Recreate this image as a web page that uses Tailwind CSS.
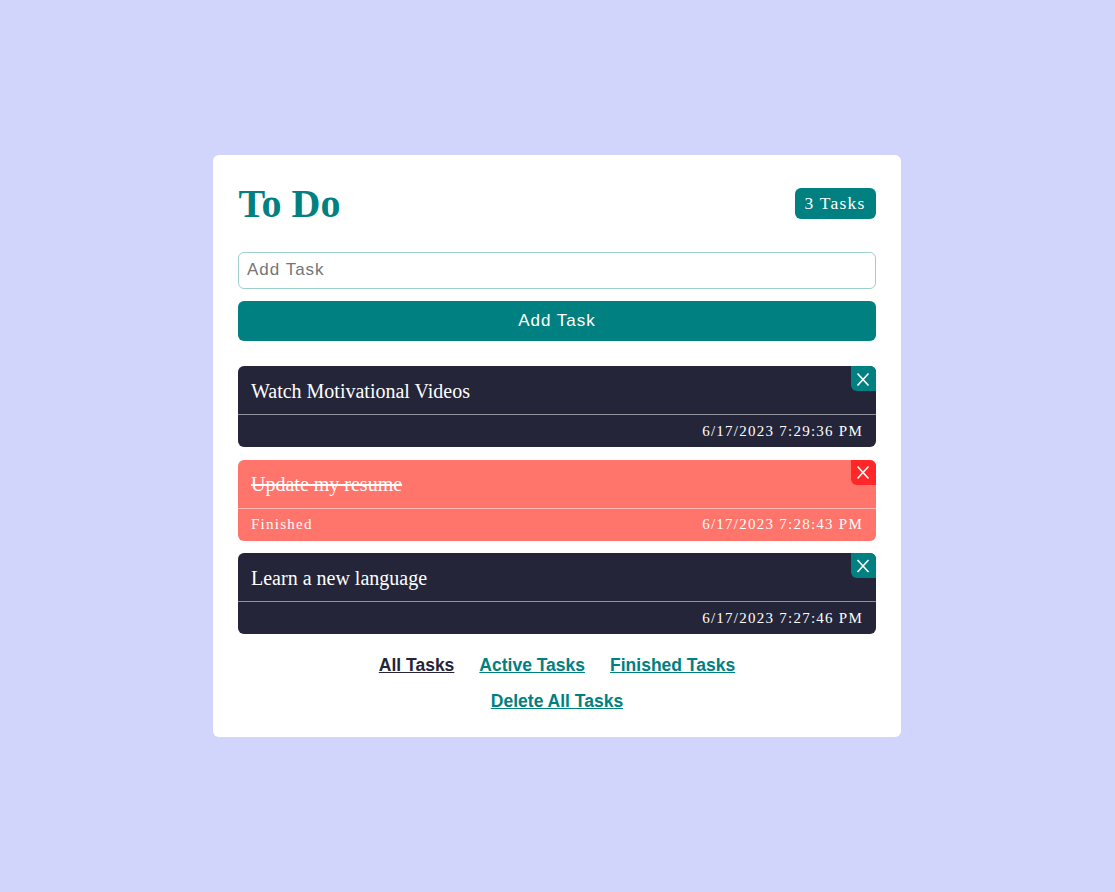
<!DOCTYPE html>
<html lang="en">
<head>
<meta charset="utf-8">
<title>To Do</title>
<script src="https://cdn.jsdelivr.net/npm/@tailwindcss/browser@4"></script>
</head>
<body class="min-h-screen bg-[#d2d5fb] pt-[155px] font-['Liberation_Serif',serif]">
<main class="ml-[213px] flex h-[582px] w-[688px] flex-col rounded-md bg-white px-[25px] pt-[25px]">
  <header class="flex h-[46px] items-start justify-between">
    <h1 class="pt-[1px] pl-[0.5px] text-[40px] leading-[46px] font-bold text-[#008080]">To Do</h1>
    <p class="mt-2 h-[31px] w-[81px] rounded-md bg-[#008080] pl-[9.5px] text-[17.5px] leading-[30px] tracking-[1.25px] whitespace-nowrap text-white">3 Tasks</p>
  </header>
  <form class="mt-[26px] flex flex-col gap-3 font-['Liberation_Sans',sans-serif] text-[17px] tracking-[1px]">
    <div class="h-[37px] rounded-md border border-[#9fcfcb] px-2 leading-[33px] text-[#757575]">Add Task</div>
    <button type="button" class="h-10 rounded-md bg-[#008080] leading-[38px] text-white">Add Task</button>
  </form>
  <ul class="mt-[25px] flex flex-col text-white">
    <li class="relative mb-[13px] h-[81px] rounded-md bg-[#242538]">
      <p class="h-[49px] border-b border-white/50 pl-[13px] text-[20px] leading-[51px]">Watch Motivational Videos</p>
      <div class="flex h-8 items-center justify-end px-[13px] text-[15px] tracking-[1.25px]">6/17/2023 7:29:36 PM</div>
      <button type="button" aria-label="Delete" class="absolute top-0 right-0 flex size-[25px] items-center justify-center rounded-tr-md rounded-bl-md bg-[#008080] pr-[1px]"><svg class="size-[14px]" viewBox="0 0 14 14" fill="none" stroke="white" stroke-width="1.6"><path d="M1.5 1.5 12.5 13.5M12.5 1.5 1.5 13.5"/></svg></button>
    </li>
    <li class="relative mb-3 h-[81px] rounded-md bg-[#ff746b]">
      <p class="h-[49px] border-b border-white/50 pl-[13px] text-[20px] leading-[48px] line-through">Update my resume</p>
      <div class="flex h-[30px] items-center justify-between px-[13px] text-[15px] tracking-[1.25px]"><span>Finished</span><span>6/17/2023 7:28:43 PM</span></div>
      <button type="button" aria-label="Delete" class="absolute top-0 right-0 flex size-[25px] items-center justify-center rounded-tr-md rounded-bl-md bg-[#ff2727] pr-[1px]"><svg class="size-[14px]" viewBox="0 0 14 14" fill="none" stroke="white" stroke-width="1.6"><path d="M1.5 .5 12.5 12.5M12.5 .5 1.5 12.5"/></svg></button>
    </li>
    <li class="relative h-[81px] rounded-md bg-[#242538]">
      <p class="h-[49px] border-b border-white/50 pl-[13px] text-[20px] leading-[51px]">Learn a new language</p>
      <div class="flex h-8 items-center justify-end px-[13px] text-[15px] tracking-[1.25px]">6/17/2023 7:27:46 PM</div>
      <button type="button" aria-label="Delete" class="absolute top-0 right-0 flex size-[25px] items-center justify-center rounded-tr-md rounded-bl-md bg-[#008080] pr-[1px]"><svg class="size-[14px]" viewBox="0 0 14 14" fill="none" stroke="white" stroke-width="1.6"><path d="M1.5 1 12.5 13M12.5 1 1.5 13"/></svg></button>
    </li>
  </ul>
  <nav class="mt-[21px] flex flex-wrap justify-center gap-x-[25px] gap-y-4 font-['Liberation_Sans',sans-serif] text-[17.5px] leading-5 font-bold text-[#008080]">
    <a class="text-[#242538] underline">All Tasks</a>
    <a class="underline">Active Tasks</a>
    <a class="underline">Finished Tasks</a>
    <a class="mx-32 underline">Delete All Tasks</a>
  </nav>
</main>
</body>
</html>
